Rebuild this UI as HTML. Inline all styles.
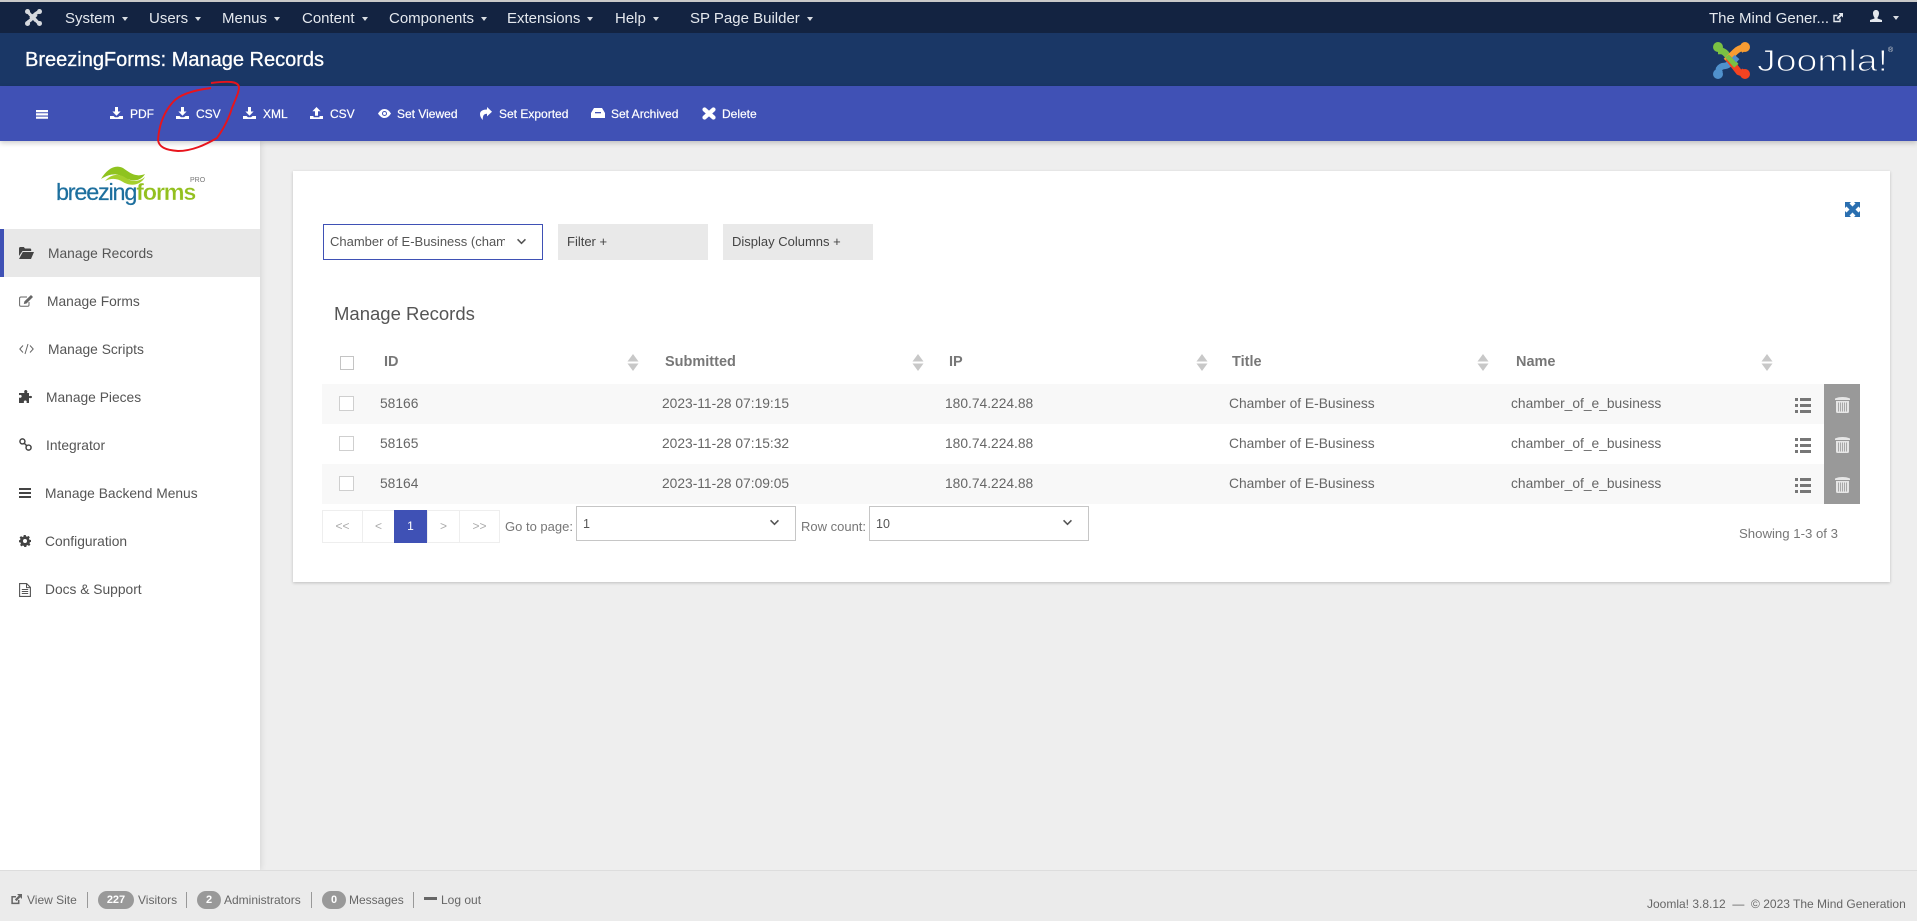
<!DOCTYPE html>
<html lang="en">
<head>
<meta charset="utf-8">
<title>BreezingForms: Manage Records</title>
<style>
html,body{margin:0;padding:0;width:1917px;height:921px;overflow:hidden;background:#eeeeee;font-family:"Liberation Sans",sans-serif}
.a{position:absolute}
.t{position:absolute;white-space:nowrap;line-height:20px}
#top{left:0;top:0;width:1917px;height:33px;background:#132341;border-top:2px solid #c9c9c9;box-sizing:border-box}
#hdr{left:0;top:33px;width:1917px;height:53px;background:#1a3766}
#bar{left:0;top:86px;width:1917px;height:55px;background:#4051b5;box-shadow:0 2px 5px rgba(0,0,0,.2);z-index:3}
#side{left:0;top:141px;width:260px;height:729px;background:#fff;box-shadow:0 0 7px rgba(0,0,0,.14)}
#card{left:293px;top:171px;width:1597px;height:411px;background:#fff;box-shadow:0 1px 3px rgba(0,0,0,.2)}
#foot{left:0;top:870px;width:1917px;height:51px;background:#ebebeb;border-top:1px solid #ddd;box-sizing:border-box;z-index:2}
.n{color:#e4e8ee;font-size:15px;top:9px}
.n i{display:inline-block;width:0;height:0;border:3.500px solid transparent;border-top:4px solid #d9dde3;border-bottom:0;margin-left:7px;vertical-align:2px}
.b{color:#fff;font-size:12px;top:104px;-webkit-text-stroke:.2px #fff;z-index:4}
.s{color:#555;font-size:13.800px}
.f{color:#666;font-size:12px;top:890px;z-index:3}
.h{color:#777;font-size:14.500px;font-weight:bold;top:352px}
.c{color:#666;font-size:13.800px}
.sep{position:absolute;top:892px;width:1px;height:16px;background:#999;z-index:3}
.bd{position:absolute;top:891px;height:18px;border-radius:9px;background:#999;color:#fff;font-size:11px;font-weight:bold;line-height:18px;text-align:center;z-index:3}
.row{position:absolute;left:322px;width:1502px;height:40px}
.cb{position:absolute;left:339px;width:13px;height:13px;border:1px solid #cfcfcf;background:#fff}
.tr{position:absolute;left:1824px;top:384px;width:36px;height:120px;background:#999}
.pg{position:absolute;top:510px;height:31px;border:1px solid #eee;color:#aaa;font-size:12px;line-height:31px;text-align:center;box-sizing:content-box}
.sel{position:absolute;top:506px;width:218px;height:33px;border:1px solid #c6c6c6;background:#fff}
svg{position:absolute;overflow:visible}
</style>
</head>
<body>
<svg width="0" height="0" style="position:absolute">
<defs>
<symbol id="dl" viewBox="0 0 13 12"><path d="M5 0h3v4.500h2.600L6.500 8.800 2.400 4.500H5zM0 9h3.500l1.500 1.300h3L9.500 9H13v3H0z" fill="#fff"/></symbol>
<symbol id="ul" viewBox="0 0 13 12"><path d="M6.500 0l4.100 4.300H8v4.500H5V4.300H2.400zM0 9h3.500v1.300h6V9H13v3H0z" fill="#fff"/></symbol>
<symbol id="list" viewBox="0 0 16 15"><path d="M0 0h3v3H0zM5 0h11v3H5zM0 6h3v3H0zM5 6h11v3H5zM0 12h3v3H0zM5 12h11v3H5z" fill="#777"/></symbol>
<symbol id="trash" viewBox="0 0 15 16"><path d="M0 1.500C3 .3 5 0 7.500 0S12 .3 15 1.500V3H0zM1 4h13v10.500c0 1-.5 1.500-1.500 1.500h-10C1.500 16 1 15.500 1 14.500z" fill="#e6e6e6"/><path d="M3.500 5.500v9M5.500 5.500v9M7.500 5.500v9M9.500 5.500v9M11.500 5.500v9" stroke="#999" stroke-width=".8"/></symbol>
<symbol id="sort" viewBox="0 0 12 17"><path d="M6 0l5.500 7.500H.5zM.5 9.500h11L6 17z" fill="#c8c8c8"/></symbol>
<symbol id="chev" viewBox="0 0 12 8"><path d="M1.500 1.500L6 6l4.500-4.500" fill="none" stroke="#555" stroke-width="1.800"/></symbol>
</defs>
</svg>

<div class="a" id="top"></div>
<div class="a" id="hdr"></div>
<div class="a" id="bar"></div>
<div class="a" id="side"></div>
<div class="a" id="card"></div>
<div class="a" id="foot"></div>

<!-- top nav -->
<svg style="left:25px;top:9px" width="17" height="17" viewBox="0 0 37 37">
<g fill="none" stroke="#d6d9de" stroke-width="7">
<path d="M5 6Q9 9 12 13L24 26"/><path d="M32 6Q27 7 22 11L12 21"/><path d="M5 31Q7 27 11 25L25 12"/><path d="M32 31Q28 30 25 26L13 13"/>
</g>
<circle cx="5.500" cy="5.500" r="5.500" fill="#d6d9de"/><circle cx="31.500" cy="5.500" r="5.500" fill="#d6d9de"/><circle cx="5.500" cy="31.500" r="5.500" fill="#d6d9de"/><circle cx="31.500" cy="31.500" r="5.500" fill="#d6d9de"/>
</svg>
<div class="t n" style="left:65px">System<i></i></div>
<div class="t n" style="left:149px">Users<i></i></div>
<div class="t n" style="left:222px">Menus<i></i></div>
<div class="t n" style="left:302px">Content<i></i></div>
<div class="t n" style="left:389px">Components<i></i></div>
<div class="t n" style="left:507px">Extensions<i></i></div>
<div class="t n" style="left:615px">Help<i></i></div>
<div class="t n" style="left:690px">SP Page Builder<i></i></div>
<div class="t n" style="left:1709px">The Mind Gener...</div>
<svg style="left:1833px;top:13px" width="10" height="10" viewBox="0 0 10 10"><path d="M7 5.500V8.500H1V2.500H4.500" fill="none" stroke="#e4e8ee" stroke-width="1.400"/><path d="M5.500 0H10V4.500L8.500 3 5 6.500 3.500 5 7 1.500z" fill="#e4e8ee"/></svg>
<svg style="left:1870px;top:10px" width="12" height="12" viewBox="0 0 12 12"><path d="M6 0c1.800 0 3 1.300 3 3.200S8 7 7.500 7.700v.8L12 10v2H0v-2l4.500-1.500v-.8C4 7 3 5.100 3 3.200S4.200 0 6 0z" fill="#e4e8ee"/></svg>
<div class="a" style="left:1893px;top:16px;width:0;height:0;border:3.500px solid transparent;border-top:4px solid #d9dde3;border-bottom:0"></div>

<!-- header -->
<div class="t" style="left:25px;top:50px;color:#fff;font-size:20px;-webkit-text-stroke:.3px #fff">BreezingForms: Manage Records</div>
<svg style="left:1713px;top:42px" width="37" height="37" viewBox="0 0 37 37">
<g fill="none" stroke-width="6.500">
<path d="M5 9L9 9Q12 10 14 13L23 24" stroke="#7ac143"/>
<path d="M32 9L30 6Q26 6 22 10L13 19" stroke="#f89c32"/>
<path d="M9 32Q5 31 6 27Q8 24 11 24Q16 24 24 15" stroke="#5091cd"/>
<path d="M32 28Q30 32 26 30L15 16" stroke="#f44321"/>
<path d="M14 14L23 24" stroke="#7ac143" stroke-width="5"/>
</g>
<circle cx="5" cy="5" r="5" fill="#7ac143"/><circle cx="32" cy="5" r="5" fill="#f89c32"/>
<circle cx="5" cy="32" r="5" fill="#5091cd"/><circle cx="32" cy="32" r="5" fill="#f44321"/>
</svg>
<svg style="left:1757px;top:42px" width="140" height="36" viewBox="0 0 140 36">
<text x="0" y="29" font-family="Liberation Sans,sans-serif" font-size="31" fill="#fff" stroke="#1a3766" stroke-width="1" textLength="131" lengthAdjust="spacingAndGlyphs">Joomla!</text>
<text x="131" y="10" font-family="Liberation Sans,sans-serif" font-size="7" fill="#ddd">®</text>
</svg>

<!-- toolbar -->
<svg style="left:36px;top:110px;z-index:4" width="12" height="9" viewBox="0 0 12 9"><path d="M0 0h12v2.200H0zM0 3.300h12v2.200H0zM0 6.600h12v2.200H0z" fill="#fff"/></svg>
<svg style="left:110px;top:107px;z-index:4" width="13" height="12"><use href="#dl"/></svg>
<div class="t b" style="left:130px">PDF</div>
<svg style="left:176px;top:107px;z-index:4" width="13" height="12"><use href="#dl"/></svg>
<div class="t b" style="left:196px">CSV</div>
<svg style="left:243px;top:107px;z-index:4" width="13" height="12"><use href="#dl"/></svg>
<div class="t b" style="left:263px">XML</div>
<svg style="left:310px;top:107px;z-index:4" width="13" height="12"><use href="#ul"/></svg>
<div class="t b" style="left:330px">CSV</div>
<svg style="left:378px;top:109px;z-index:4" width="13" height="9" viewBox="0 0 13 9"><path d="M0 4.500C2 1.500 4 0 6.500 0S11 1.500 13 4.500C11 7.500 9 9 6.500 9S2 7.500 0 4.500z" fill="#fff"/><circle cx="6.500" cy="4.500" r="2.500" fill="#4051b5"/><circle cx="6.500" cy="4.500" r="1.500" fill="#fff"/></svg>
<div class="t b" style="left:397px">Set Viewed</div>
<svg style="left:480px;top:107px;z-index:4" width="12" height="13" viewBox="0 0 12 13"><path d="M7 0l5 4.700L7 9.400V6.800C4 6.800 2.600 8.500 2.800 13 .8 11 0 9 0 7 0 4 3 2.500 7 2.500z" fill="#fff"/></svg>
<div class="t b" style="left:499px">Set Exported</div>
<svg style="left:591px;top:108px;z-index:4" width="14" height="10" viewBox="0 0 14 10"><path d="M3 0h8l3 5v5H0V5z" fill="#fff"/><path d="M4 4h6v1.300H4z" fill="#4051b5"/></svg>
<div class="t b" style="left:611px">Set Archived</div>
<svg style="left:702px;top:107px;z-index:4" width="14" height="13" viewBox="0 0 14 13"><path d="M2.500 2.500l9 8M11.500 2.500l-9 8" stroke="#fff" stroke-width="4.200" stroke-linecap="round"/></svg>
<div class="t b" style="left:722px">Delete</div>

<!-- red scribble -->
<svg style="left:0;top:0;z-index:6" width="300" height="160"><path d="M173 102C164 112 159 125 158 140C159 147 165 150 178 151C192 151 205 145 217 138C224 128 229 118 232 108C236 98 239 92 239 87C238 81 228 81 211 83" fill="none" stroke="#e8141c" stroke-width="1.900"/><path d="M173 102C180 94 195 90 211 88" fill="none" stroke="#e8141c" stroke-width="1.900"/></svg>

<!-- sidebar -->
<svg style="left:57px;top:164px" width="150" height="60" viewBox="0 0 150 60"><path d="M44 15C50 5 58 0 66 4 72 8 78 14 88 10 84 17 76 18 68 14 60 9 54 9 44 15z" fill="#8fc31f"/><path d="M48 17C54 10 62 9 69 14 75 18 82 18 88 13 84 21 74 23 66 18 60 14 54 14 48 17z" fill="#a5cf2d"/></svg>
<div class="t" style="left:56px;top:182px;font-size:23.400px;font-weight:bold;letter-spacing:-1.200px;color:#1d6f9e;-webkit-text-stroke:.3px #fff"><span style="font-weight:normal;-webkit-text-stroke:.2px #1d6f9e">breezing</span><span style="color:#93c01f">forms</span></div>
<div class="t" style="left:190px;top:171px;font-size:7px;color:#777">PRO</div>

<div class="a" style="left:0;top:229px;width:260px;height:48px;background:#e8e8e8;border-left:4px solid #3f51b5;box-sizing:border-box"></div>
<div class="t s" style="left:48px;top:244px">Manage Records</div>
<div class="t s" style="left:47px;top:292px">Manage Forms</div>
<div class="t s" style="left:48px;top:340px">Manage Scripts</div>
<div class="t s" style="left:46px;top:388px">Manage Pieces</div>
<div class="t s" style="left:46px;top:436px">Integrator</div>
<div class="t s" style="left:45px;top:484px">Manage Backend Menus</div>
<div class="t s" style="left:45px;top:532px">Configuration</div>
<div class="t s" style="left:45px;top:580px">Docs &amp; Support</div>
<svg style="left:19px;top:247px" width="15" height="12" viewBox="0 0 15 12"><path d="M0 1.500C0 .7.500 0 1.300 0h3.500l1.200 1.500h5c.8 0 1.200.4 1.200 1.200V4H3.500L0 9z" fill="#444"/><path d="M3.800 5H15l-3 7H0z" fill="#444"/></svg>
<svg style="left:19px;top:295px" width="14" height="12" viewBox="0 0 14 12"><path d="M10 7v3c0 .8-.5 1.300-1.300 1.300H2C1 11.300.6 10.800.6 10V3.300C.6 2.500 1 2 2 2h6" fill="none" stroke="#666" stroke-width="1"/><path d="M12 0l2 2-6.500 6.500L4.800 9l.6-2.600z" fill="#666"/></svg>
<svg style="left:19px;top:344px" width="15" height="10" viewBox="0 0 15 10"><path d="M4 1.500L.8 5 4 8.500M11 1.500L14.200 5 11 8.500M9 0L6 10" fill="none" stroke="#666" stroke-width="1"/></svg>
<svg style="left:19px;top:390px" width="14" height="13" viewBox="0 0 14 13"><path d="M4 3h1.500c-.8-1.800 0-3 1.200-3S9 1.200 8 3h2v3.300c1.500-.8 3-.5 3 .7s-1.500 1.500-3 .7V13H7.500c.6-1.500 0-2.500-1.200-2.500S4.500 11.500 5 13H0V7.500c1.500.8 2.700 0 2.700-1.200S1.500 4.500 0 5.200V3z" fill="#444"/></svg>
<svg style="left:19px;top:438px" width="13" height="13" viewBox="0 0 14 14"><g fill="none" stroke="#444" stroke-width="1.600"><circle cx="3.700" cy="3.700" r="2.700"/><circle cx="10.300" cy="10.300" r="2.700"/><path d="M5.500 5.500l3 3"/></g></svg>
<svg style="left:19px;top:488px" width="12" height="10" viewBox="0 0 12 10"><path d="M0 0h12v2H0zM0 4h12v2H0zM0 8h12v2H0z" fill="#444"/></svg>
<svg style="left:19px;top:535px" width="12" height="12" viewBox="0 0 24 24"><path d="M24 14v-4l-3.200-.6-.9-2.200 1.800-2.700-2.800-2.800-2.700 1.800-2.200-.9L13.500 0h-4l-.6 3.200-2.200.9L4 2.300 1.200 5.100 3 7.800l-.9 2.200L0 10.500v4l3 .6.900 2.200L2.200 20 5 22.800l2.700-1.800 2.200.9.600 2.100h4l.6-3 2.200-.9 2.700 1.800 2.800-2.800-1.800-2.700.9-2.200zM12 16a4 4 0 1 1 0-8 4 4 0 0 1 0 8z" fill="#444"/></svg>
<svg style="left:19px;top:583px" width="12" height="14" viewBox="0 0 12 14"><path d="M.6.600h7l3.800 3.800v9H.6z" fill="none" stroke="#555" stroke-width="1.100"/><path d="M7.500.6v4h4M2.800 6.500h6.400M2.800 8.500h6.400M2.800 10.500h6.400" fill="none" stroke="#555" stroke-width="1"/></svg>

<!-- card controls -->
<svg style="left:1845px;top:202px" width="15" height="15" viewBox="0 0 15 15"><path d="M0 0h6L4.500 1.500 7.500 4.500 10.500 1.500 9 0h6v6L13.500 4.500 10.500 7.500 13.500 10.500 15 9v6H9L10.500 13.500 7.500 10.500 4.500 13.500 6 15H0V9L1.500 10.500 4.500 7.500 1.500 4.500 0 6z" fill="#2a6fb0"/></svg>
<div class="a" style="left:323px;top:224px;width:218px;height:34px;border:1px solid #3f51b5;background:#fff"></div>
<div class="t" style="left:330px;top:232px;width:175px;overflow:hidden;color:#555;font-size:13px">Chamber of E-Business (chamber_of_e_business)</div>
<svg style="left:516px;top:238px" width="11" height="7" viewBox="0 0 12 8"><use href="#chev" width="12" height="8"/></svg>
<div class="a" style="left:558px;top:224px;width:150px;height:36px;background:#e9e9e9"></div>
<div class="t" style="left:567px;top:232px;color:#444;font-size:13px">Filter +</div>
<div class="a" style="left:723px;top:224px;width:150px;height:36px;background:#e9e9e9"></div>
<div class="t" style="left:732px;top:232px;color:#444;font-size:13px">Display Columns +</div>
<div class="t" style="left:334px;top:304px;color:#555;font-size:18.500px">Manage Records</div>

<!-- table head -->
<div class="a" style="left:340px;top:356px;width:12px;height:12px;border:1px solid #c4c4c4"></div>
<div class="t h" style="left:384px">ID</div>
<div class="t h" style="left:665px">Submitted</div>
<div class="t h" style="left:949px">IP</div>
<div class="t h" style="left:1232px">Title</div>
<div class="t h" style="left:1516px">Name</div>
<svg style="left:627px;top:354px" width="12" height="17"><use href="#sort"/></svg>
<svg style="left:912px;top:354px" width="12" height="17"><use href="#sort"/></svg>
<svg style="left:1196px;top:354px" width="12" height="17"><use href="#sort"/></svg>
<svg style="left:1477px;top:354px" width="12" height="17"><use href="#sort"/></svg>
<svg style="left:1761px;top:354px" width="12" height="17"><use href="#sort"/></svg>

<!-- rows -->
<div class="row" style="top:384px;background:#f8f8f8"></div>
<div class="row" style="top:464px;background:#f8f8f8"></div>
<div class="tr"></div>

<div class="cb" style="top:396px"></div>
<div class="t c" style="left:380px;top:394px">58166</div>
<div class="t c" style="left:662px;top:394px">2023-11-28 07:19:15</div>
<div class="t c" style="left:945px;top:394px">180.74.224.88</div>
<div class="t c" style="left:1229px;top:394px">Chamber of E-Business</div>
<div class="t c" style="left:1511px;top:394px">chamber_of_e_business</div>
<svg style="left:1795px;top:398px" width="16" height="15"><use href="#list"/></svg>
<svg style="left:1835px;top:397px" width="15" height="16"><use href="#trash"/></svg>

<div class="cb" style="top:436px"></div>
<div class="t c" style="left:380px;top:434px">58165</div>
<div class="t c" style="left:662px;top:434px">2023-11-28 07:15:32</div>
<div class="t c" style="left:945px;top:434px">180.74.224.88</div>
<div class="t c" style="left:1229px;top:434px">Chamber of E-Business</div>
<div class="t c" style="left:1511px;top:434px">chamber_of_e_business</div>
<svg style="left:1795px;top:438px" width="16" height="15"><use href="#list"/></svg>
<svg style="left:1835px;top:437px" width="15" height="16"><use href="#trash"/></svg>

<div class="cb" style="top:476px"></div>
<div class="t c" style="left:380px;top:474px">58164</div>
<div class="t c" style="left:662px;top:474px">2023-11-28 07:09:05</div>
<div class="t c" style="left:945px;top:474px">180.74.224.88</div>
<div class="t c" style="left:1229px;top:474px">Chamber of E-Business</div>
<div class="t c" style="left:1511px;top:474px">chamber_of_e_business</div>
<svg style="left:1795px;top:478px" width="16" height="15"><use href="#list"/></svg>
<svg style="left:1835px;top:477px" width="15" height="16"><use href="#trash"/></svg>

<!-- pagination -->
<div class="pg" style="left:322px;width:39px">&lt;&lt;</div>
<div class="pg" style="left:362px;width:31px">&lt;</div>
<div class="pg" style="left:394px;width:33px;background:#3f51b5;color:#fff;height:33px;top:510px;border:0;line-height:33px">1</div>
<div class="pg" style="left:427px;width:31px">&gt;</div>
<div class="pg" style="left:459px;width:39px">&gt;&gt;</div>
<div class="t" style="left:505px;top:517px;color:#777;font-size:13px">Go to page:</div>
<div class="sel" style="left:576px"></div>
<div class="t" style="left:583px;top:514px;color:#555;font-size:12.500px">1</div>
<svg style="left:769px;top:519px" width="11" height="7" viewBox="0 0 12 8"><use href="#chev" width="12" height="8"/></svg>
<div class="t" style="left:801px;top:517px;color:#777;font-size:13px">Row count:</div>
<div class="sel" style="left:869px"></div>
<div class="t" style="left:876px;top:514px;color:#555;font-size:12.500px">10</div>
<svg style="left:1062px;top:519px" width="11" height="7" viewBox="0 0 12 8"><use href="#chev" width="12" height="8"/></svg>
<div class="t" style="left:1739px;top:524px;color:#777;font-size:13.200px">Showing 1-3 of 3</div>

<!-- footer -->
<svg style="left:11px;top:894px;z-index:3" width="11" height="11" viewBox="0 0 10 10"><path d="M7 5.500V8.500H1V2.500H4.500" fill="none" stroke="#666" stroke-width="1.400"/><path d="M5.500 0H10V4.500L8.500 3 5 6.500 3.500 5 7 1.500z" fill="#666"/></svg>
<div class="t f" style="left:27px">View Site</div>
<div class="sep" style="left:87px"></div>
<div class="bd" style="left:98px;width:36px">227</div>
<div class="t f" style="left:138px">Visitors</div>
<div class="sep" style="left:186px"></div>
<div class="bd" style="left:197px;width:24px">2</div>
<div class="t f" style="left:224px">Administrators</div>
<div class="sep" style="left:311px"></div>
<div class="bd" style="left:322px;width:24px">0</div>
<div class="t f" style="left:349px">Messages</div>
<div class="sep" style="left:413px"></div>
<div class="a" style="left:424px;top:897px;width:13px;height:3px;background:#666;z-index:3"></div>
<div class="t f" style="left:441px">Log out</div>
<div class="t f" style="left:1647px;top:894px">Joomla! 3.8.12 &nbsp;— &nbsp;© 2023 The Mind Generation</div>
</body>
</html>
